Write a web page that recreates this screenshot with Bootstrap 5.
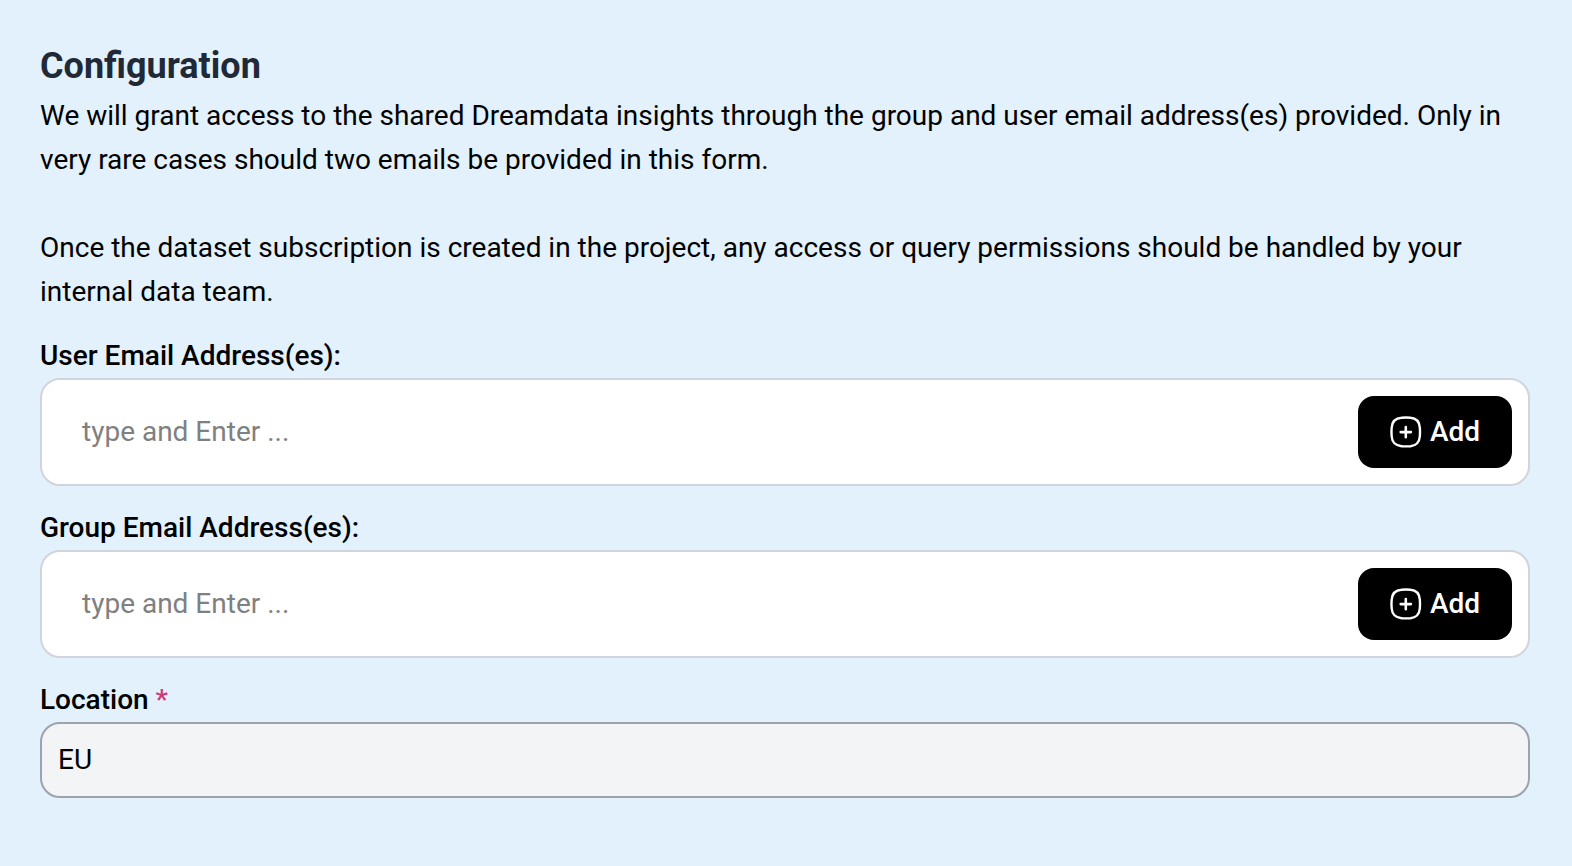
<!DOCTYPE html>
<html lang="en">
<head>
<meta charset="utf-8">
<meta name="viewport" content="width=device-width, initial-scale=1">
<title>Configuration</title>
<link rel="stylesheet" href="https://cdn.jsdelivr.net/npm/bootstrap@5.3.0/dist/css/bootstrap.min.css">
<style>
body{background:#e2f1fc;color:#000;font-family:Roboto,"Liberation Sans",sans-serif;font-size:28px;line-height:44px}
.config-form{padding:44px 42px 44px 40px}
.config-title{font-size:36px;line-height:44px;font-weight:700;color:#1f2937;margin-bottom:6px}
.intro{margin-bottom:20px}
.intro p{margin-bottom:44px}
.intro p:last-child{margin-bottom:0}
.field{margin-bottom:20px}
.field-label{font-weight:500}
.email-box{background:#fff;border:2px solid #d1d5db;border-radius:20px;padding:16px}
.email-box .form-control{border:0;background:transparent;font-size:28px;line-height:44px;padding:0 24px;box-shadow:none;color:#000}
.email-box .form-control::placeholder{color:#808080;opacity:1}
.add-btn{--bs-btn-font-size:28px;--bs-btn-font-weight:500;--bs-btn-line-height:44px;--bs-btn-padding-x:32px;--bs-btn-padding-y:14px;--bs-btn-border-width:0;--bs-btn-border-radius:16px;--bs-btn-bg:#000;--bs-btn-color:#fff;--bs-btn-hover-bg:#222;--bs-btn-hover-color:#fff}
.location-input,.location-input:read-only{border:2px solid #9ca3af;border-radius:20px;background:#f3f4f6;color:#000;font-size:28px;line-height:44px;padding:14px 16px}
.req{color:#d03a78}
</style>
</head>
<body>
<svg class="d-none" xmlns="http://www.w3.org/2000/svg">
<symbol id="plus-icon" viewBox="0 0 32 32">
<path d="M11.500 1.800Q16 1.200 20.500 1.800C27 2.300 29.300 5.500 29.800 11.500Q30.200 16 29.800 20.500C29.300 26.800 26.500 29.500 20.500 30.200Q16 30.600 11.500 30.200C5 29.500 2.200 26.800 1.700 20.500Q1.300 16 1.700 11.500C2.200 5.500 5 2.300 11.500 1.800Z" fill="none" stroke="currentColor" stroke-width="2.400"/>
<path d="M15.800 11v10.200M10.700 16.100h10.200" fill="none" stroke="currentColor" stroke-width="2.600" stroke-linecap="round"/>
</symbol>
</svg>
<form class="config-form">
<h1 class="config-title">Configuration</h1>
<div class="intro">
<p>We will grant access to the shared Dreamdata insights through the group and user email address(es) provided. Only in very rare cases should two emails be provided in this form.</p>
<p>Once the dataset subscription is created in the project, any access or query permissions should be handled by your internal data team.</p>
</div>
<div class="field">
<label class="field-label d-block" for="userEmail">User Email Address(es):</label>
<div class="email-box d-flex align-items-center">
<input class="form-control" id="userEmail" type="text" placeholder="type and Enter ...">
<button type="button" class="btn add-btn d-flex align-items-center gap-2"><svg width="32" height="32" aria-hidden="true"><use href="#plus-icon"/></svg>Add</button>
</div>
</div>
<div class="field">
<label class="field-label d-block" for="groupEmail">Group Email Address(es):</label>
<div class="email-box d-flex align-items-center">
<input class="form-control" id="groupEmail" type="text" placeholder="type and Enter ...">
<button type="button" class="btn add-btn d-flex align-items-center gap-2"><svg width="32" height="32" aria-hidden="true"><use href="#plus-icon"/></svg>Add</button>
</div>
</div>
<div class="field">
<label class="field-label d-block" for="location">Location <span class="req">*</span></label>
<input class="form-control location-input" id="location" type="text" value="EU" readonly required>
</div>
</form>
<script src="https://cdn.jsdelivr.net/npm/bootstrap@5.3.0/dist/js/bootstrap.bundle.min.js"></script>
</body>
</html>
